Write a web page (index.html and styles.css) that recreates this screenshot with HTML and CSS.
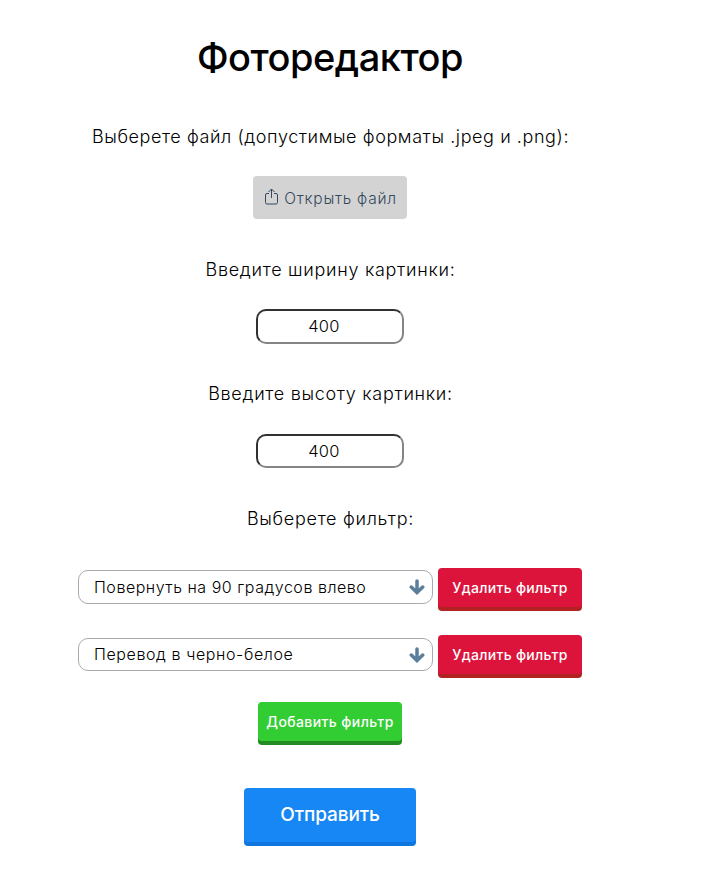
FILE: index.html
```
<!DOCTYPE html>
<html lang="ru"><head><meta charset="utf-8"><title>Фоторедактор</title><link rel="stylesheet" href="styles.css"></head>
<body><main class="editor">
<h1 class="title">Фоторедактор</h1>
<p class="label label-file">Выберете файл (допустимые форматы .jpeg и .png):</p>
<button class="file"><svg class="upload" viewBox="0 0 13 17" width="13" height="17"><path d="M4 5.500H2Q.5 5.500.5 7v7.500Q.5 16 2 16h9q1.500 0 1.500-1.500V7q0-1.500-1.500-1.500H9M6.500 10V1M3.500 4l3-3 3 3"/></svg><span>Открыть файл</span></button>
<p class="label label-width">Введите ширину картинки:</p>
<input class="size" value="400">
<p class="label label-height">Введите высоту картинки:</p>
<input class="size size-height" value="400">
<p class="label label-filter">Выберете фильтр:</p>
<div class="row"><div class="select"><span class="rotate">Повернуть на 90 градусов влево</span><svg class="arrow" viewBox="0 0 16 16" width="16" height="16"><path d="M8 2v11M2.300 8 8 13.500 13.700 8"/></svg></div><button class="btn remove">Удалить фильтр</button></div>
<div class="row"><div class="select"><span class="mono">Перевод в черно-белое</span><svg class="arrow" viewBox="0 0 16 16" width="16" height="16"><path d="M8 2v11M2.300 8 8 13.500 13.700 8"/></svg></div><button class="btn remove">Удалить фильтр</button></div>
<button class="btn add">Добавить фильтр</button>
<button class="btn send">Отправить</button>
</main></body></html>
```
FILE: styles.css
```
* { box-sizing: border-box; }
body { margin: 0; background: #fff; color: #000; font-family: Inter, sans-serif; }
button, input { font: inherit; margin: 0; padding: 0; white-space: nowrap; }
.editor { width: 660px; min-height: 894px; display: flex; flex-direction: column; align-items: center; }
.title { margin: 33px 0 0; font-size: 38px; line-height: 48px; font-weight: 500; letter-spacing: -0.5px; }
.label { margin: 0; padding-left: 1px; font-size: 18px; line-height: 24px; font-weight: 300; letter-spacing: 0.7px; white-space: nowrap; }
.label-file { margin-top: 44px; letter-spacing: 0.58px; }
.file { width: 154px; height: 43px; margin-top: 27px; border: 0; border-radius: 4px; background: #d3d3d3; color: #34495e; font-size: 15.5px; font-weight: 300; letter-spacing: 0.75px; display: flex; align-items: center; justify-content: center; gap: 6px; padding-left: 2px; }
.file span { padding-top: 1px; }
.upload { fill: none; stroke: #34495e; stroke-width: 1; margin-top: -3px; }
.label-width { margin-top: 39px; }
.size { width: 148px; height: 35px; margin-top: 27px; border: 2px inset #858585; border-radius: 10px; text-align: center; font-size: 16.5px; font-weight: 300; letter-spacing: 0.3px; padding: 0 12px 2px 0; }
.label-height { margin-top: 38px; }
.size-height { height: 34px; margin-top: 28px; padding-bottom: 0; }
.label-filter { margin-top: 39px; }
.row { display: flex; align-items: flex-start; gap: 5px; margin-top: 37px; }
.row + .row { margin-top: 24px; }
.select { width: 355px; height: 34px; margin-top: 2px; border: 1px solid #aaa; border-radius: 10px; padding: 0 7px 0 15px; display: flex; align-items: center; justify-content: space-between; font-size: 16px; font-weight: 300; }
.row + .row .select { height: 33px; margin-top: 3px; }
.rotate { letter-spacing: 0.53px; }
.mono { letter-spacing: 0.6px; margin-top: -2px; }
.arrow { fill: none; stroke: #5b7f9b; stroke-width: 3.500; stroke-linecap: round; stroke-linejoin: miter; }
.btn { border: 0; border-radius: 4px; color: #fff; font-size: 14px; font-weight: 500; }
.remove { width: 144px; height: 39px; margin-bottom: 4px; background: #dc143c; box-shadow: 0 4px #b22222; letter-spacing: 0.3px; }
.add { width: 144px; height: 39px; margin: 24px 0 4px; background: #32cd32; box-shadow: 0 4px #228b22; letter-spacing: 0.4px; }
.send { width: 172px; height: 54px; margin-top: 43px; background: #1787f5; box-shadow: 0 4px #0f75df; font-size: 19px; letter-spacing: -0.1px; padding-bottom: 1px; }
```
